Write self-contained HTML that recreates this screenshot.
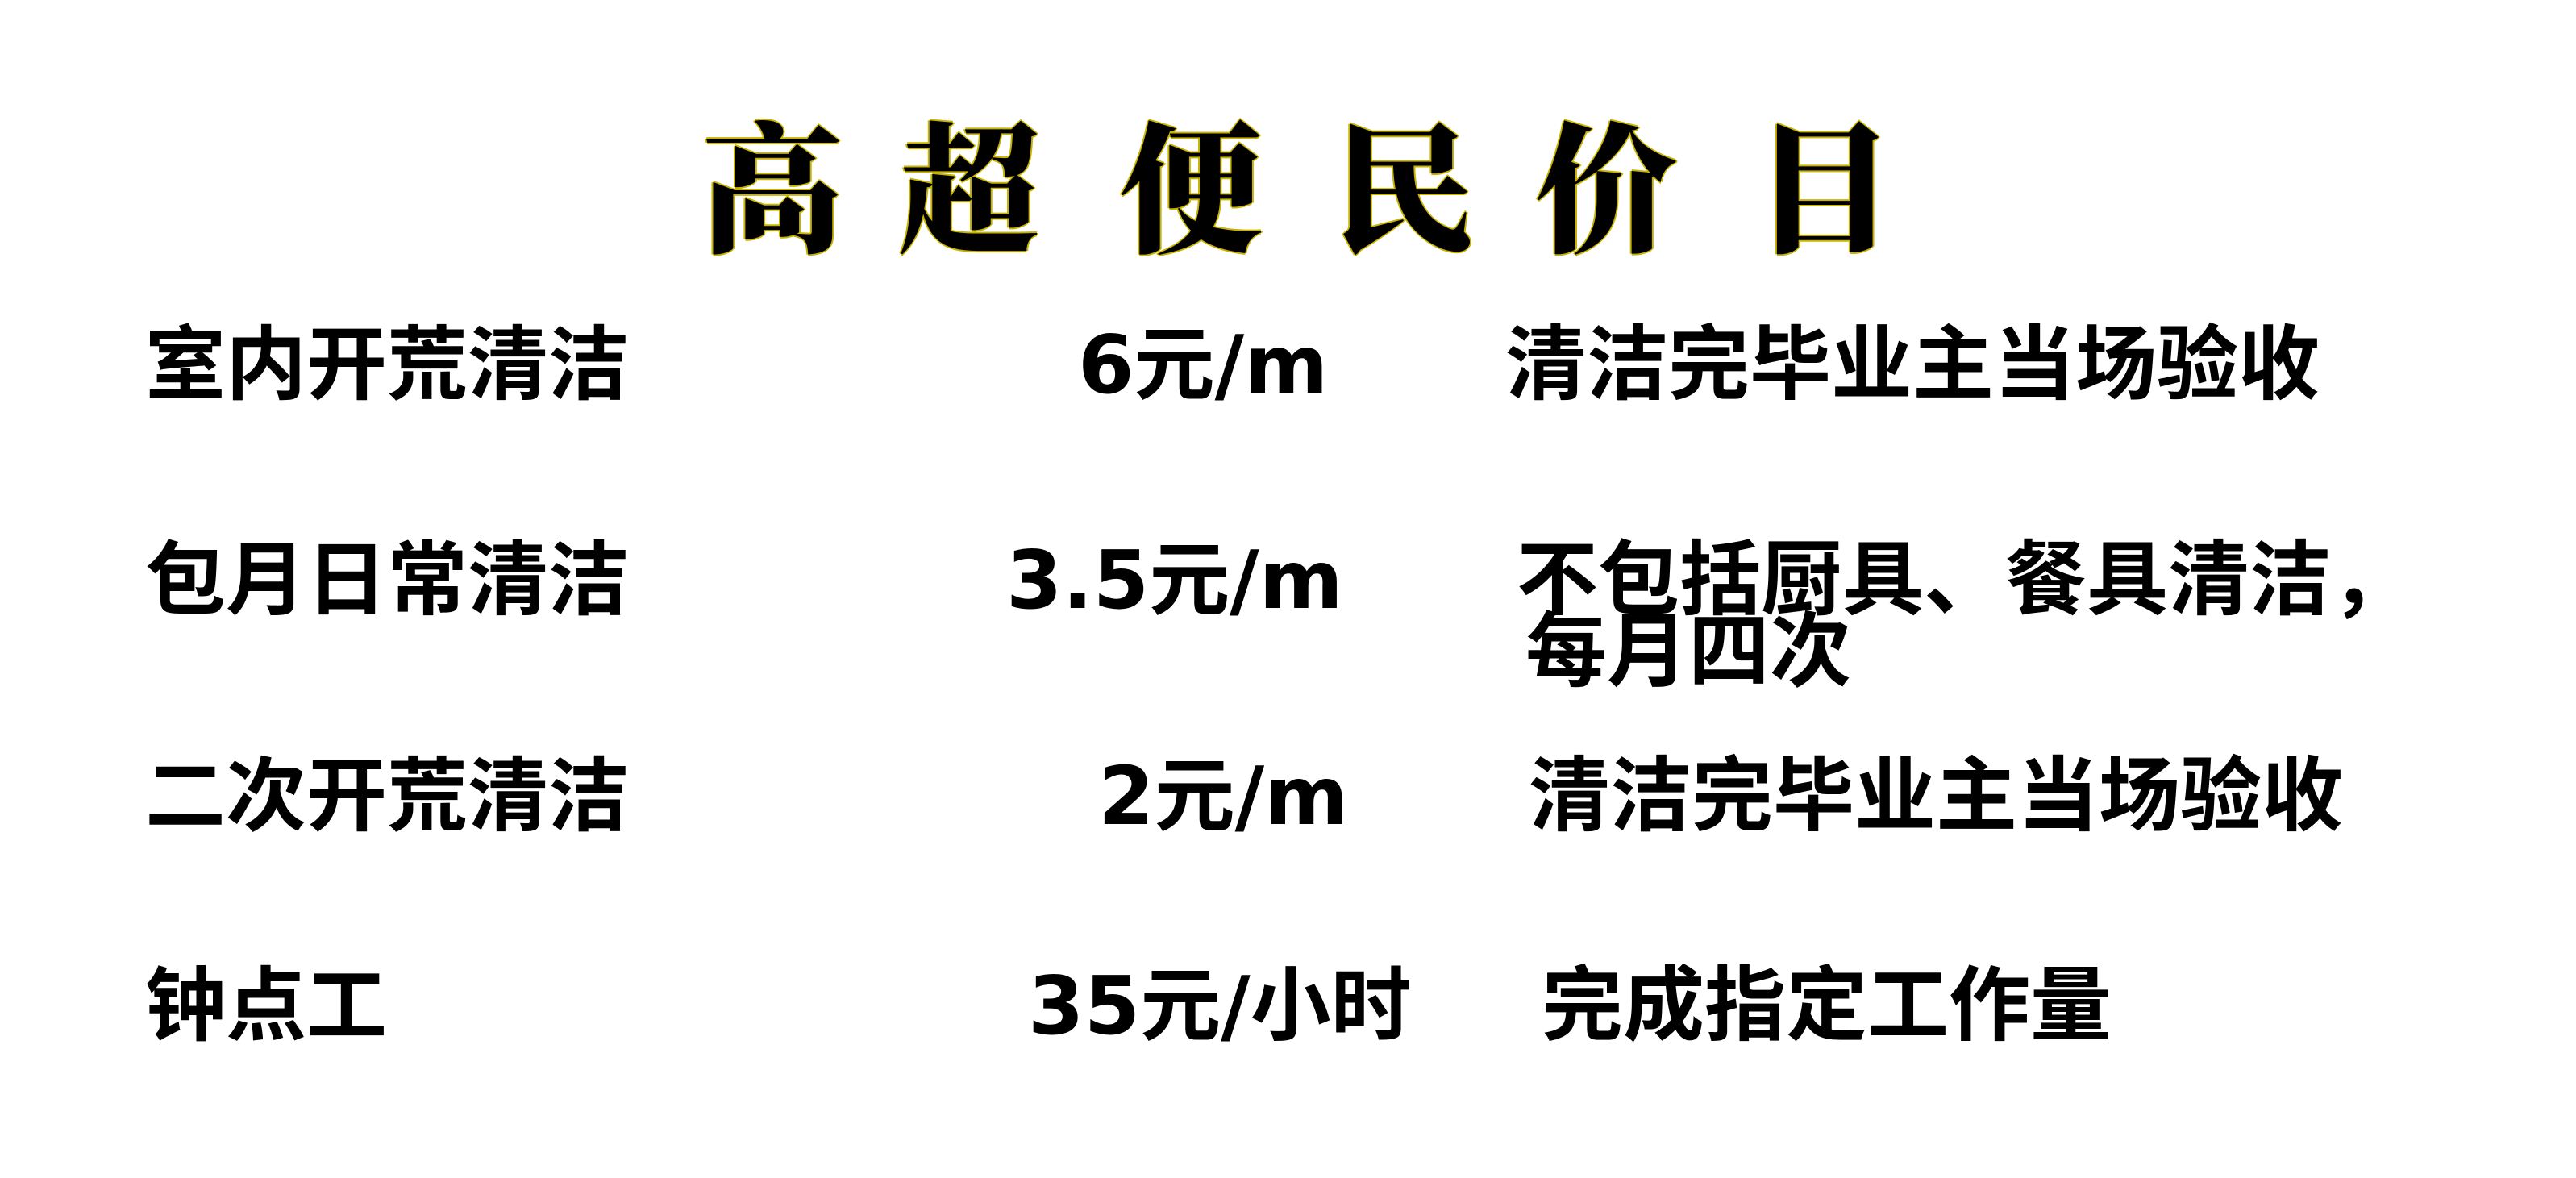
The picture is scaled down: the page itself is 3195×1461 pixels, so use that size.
<!DOCTYPE html>
<html><head><meta charset="utf-8">
<style>
html,body{margin:0;padding:0;background:#fff;}
body{width:3195px;height:1461px;position:relative;overflow:hidden;}
.t{position:absolute;top:130px;font-family:"Noto Serif CJK SC","Liberation Serif",serif;font-weight:900;font-size:175px;line-height:190px;color:#000;
text-shadow:2px 0 0 #c8b400,-2px 0 0 #c8b400,0 2px 0 #c8b400,0 -2px 0 #c8b400;}
.r{position:absolute;font-family:"Liberation Sans","Noto Sans CJK SC",sans-serif;font-weight:bold;font-size:100px;line-height:110px;color:#000;white-space:nowrap;}
.d{font-family:"DejaVu Sans","Noto Sans CJK SC",sans-serif;}
.w{font-size:101px;}
</style></head><body>
<div class="t" style="left:870px">高</div>
<div class="t" style="left:1115px">超</div>
<div class="t" style="left:1390px">便</div>
<div class="t" style="left:1655px">民</div>
<div class="t" style="left:1905px">价</div>
<div class="t" style="left:2175px">目</div>

<div class="r" style="left:180px;top:398px">室内开荒清洁</div>
<div class="r d" style="left:1337px;top:398px">6元/m</div>
<div class="r w" style="left:1867px;top:398px">清洁完毕业主当场验收</div>

<div class="r" style="left:180px;top:665px">包月日常清洁</div>
<div class="r d" style="left:1248px;top:665px">3.5元/m</div>
<div class="r w" style="left:1881px;top:665px">不包括厨具、餐具清洁，</div>
<div class="r w" style="left:1892px;top:754px">每月四次</div>

<div class="r" style="left:180px;top:933px">二次开荒清洁</div>
<div class="r d" style="left:1362px;top:933px">2元/m</div>
<div class="r w" style="left:1896px;top:933px">清洁完毕业主当场验收</div>

<div class="r" style="left:180px;top:1193px">钟点工</div>
<div class="r d" style="left:1275px;top:1193px">35元/小时</div>
<div class="r w" style="left:1912px;top:1193px">完成指定工作量</div>
</body></html>
